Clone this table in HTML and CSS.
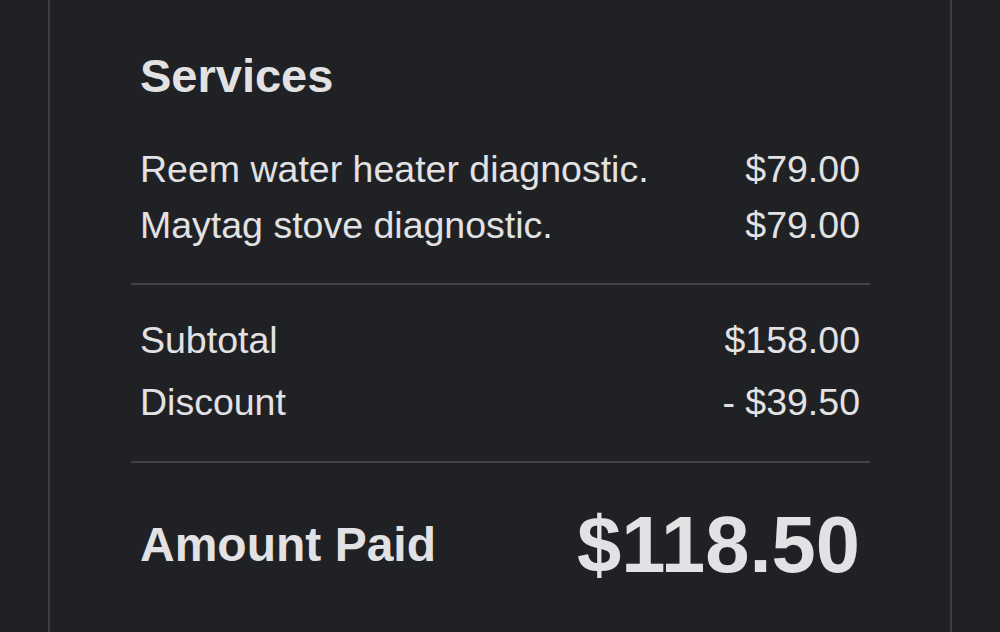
FILE: index.html
```html
<!DOCTYPE html>
<html lang="en">
<head>
  <meta charset="UTF-8">
  <meta name="viewport" content="width=device-width, initial-scale=1.0">
  <title>Receipt</title>
  <link rel="stylesheet" href="styles.css">
</head>
<body>
  <div class="receipt-card">
    <h2 class="section-title">Services</h2>

    <div class="line-items">
      <div class="row">
        <span>Reem water heater diagnostic.</span>
        <span>$79.00</span>
      </div>
      <div class="row">
        <span>Maytag stove diagnostic.</span>
        <span>$79.00</span>
      </div>
    </div>

    <div class="divider"></div>

    <div class="line-items totals">
      <div class="row">
        <span>Subtotal</span>
        <span>$158.00</span>
      </div>
      <div class="row">
        <span>Discount</span>
        <span>- $39.50</span>
      </div>
    </div>

    <div class="divider"></div>

    <div class="row amount-row">
      <span class="amount-label">Amount Paid</span>
      <span class="amount-value">$118.50</span>
    </div>
  </div>
</body>
</html>
```

FILE: styles.css
```css
html, body {
  margin: 0;
  padding: 0;
  height: 100%;
}

body {
  font-family: "Liberation Sans", Arial, sans-serif;
  background-color: #202124;
  color: #e2e2e4;
}

.receipt-card {
  box-sizing: border-box;
  min-height: 100%;
  width: 904px;
  margin-left: 48px;
  padding: 49px 80px 0 81px;
  border-left: 2px solid #3c3d41;
  border-right: 2px solid #3c3d41;
}

.section-title {
  margin: 0 0 38px 9px;
  font-size: 47px;
  line-height: 54px;
  font-weight: bold;
}

.line-items {
  display: flex;
  flex-direction: column;
}

.totals {
  gap: 6px;
  margin-top: 27px;
  margin-bottom: 31px;
}

.row {
  display: flex;
  justify-content: space-between;
  align-items: center;
  padding: 0 10px 0 9px;
  font-size: 37.5px;
  line-height: 56px;
}

.divider {
  height: 2px;
  background-color: #414246;
}

.line-items:first-of-type {
  margin-bottom: 30px;
}

.amount-row {
  margin-top: 43px;
  line-height: 78px;
  font-weight: bold;
}

.amount-label {
  font-size: 48px;
}

.amount-value {
  font-size: 79.5px;
}
```
